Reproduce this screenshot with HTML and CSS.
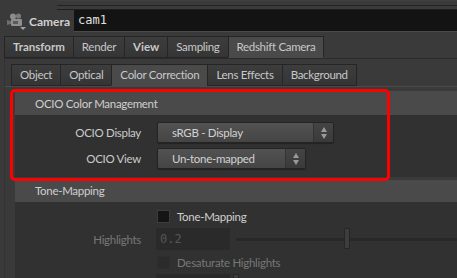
FILE: index.html
```html
<!DOCTYPE html>
<html lang="en">
<head>
<meta charset="UTF-8" />
<title>Camera Parameters</title>
<link rel="stylesheet" href="styles.css">
</head>
<body>
    <div class="strip"><div class="strip-lines"></div></div>

    <div class="nodebar">
        <div class="node-icon">
            <svg width="18" height="14" viewBox="0 0 18 14">
                <circle cx="6" cy="3.5" r="3" fill="#8c8c8c" />
                <circle cx="11.5" cy="3" r="2.6" fill="#7a7a7a" />
                <rect x="4" y="6" width="11" height="7" rx="1" fill="#8f8f8f" />
                <rect x="6" y="8" width="5" height="3" fill="#5a5a5a" />
                <path d="M0 7 L4 8 L4 11 L0 12 Z" fill="#6e6e6e" />
            </svg>
            <span class="caret"></span>
        </div>
        <span class="node-type">Camera</span>
        <div class="node-name">cam1</div>
    </div>

    <div class="tabs tabs-main">
        <div class="tab bold">Transform</div>
        <div class="tab">Render</div>
        <div class="tab bold">View</div>
        <div class="tab">Sampling</div>
        <div class="tab active">Redshift Camera</div>
    </div>

    <div class="folder">
        <div class="tabs tabs-sub">
            <div class="tab">Object</div>
            <div class="tab">Optical</div>
            <div class="tab active">Color Correction</div>
            <div class="tab">Lens Effects</div>
            <div class="tab">Background</div>
        </div>
    </div>

    <div class="folder-body">
        <div class="section">
            <div class="section-head">OCIO Color Management</div>
            <div class="section-body ocio">
                <div class="row">
                    <span class="row-label">OCIO Display</span>
                    <div class="menu menu-display">
                        <span class="menu-text">sRGB - Display</span>
                        <span class="menu-arrows"><i class="up"></i><i class="down"></i></span>
                    </div>
                </div>
                <div class="row">
                    <span class="row-label">OCIO View</span>
                    <div class="menu menu-view">
                        <span class="menu-text">Un-tone-mapped</span>
                        <span class="menu-arrows"><i class="up"></i><i class="down"></i></span>
                    </div>
                </div>
            </div>
        </div>

        <div class="section">
            <div class="section-head short">Tone-Mapping</div>
            <div class="section-body tone">
                <div class="row">
                    <span class="row-label"></span>
                    <span class="check"></span>
                    <span class="check-label">Tone-Mapping</span>
                </div>
                <div class="row">
                    <span class="row-label disabled">Highlights</span>
                    <div class="field">0.2</div>
                    <div class="slider"><span class="handle" style="left: 108px"></span></div>
                </div>
                <div class="row">
                    <span class="row-label"></span>
                    <span class="check off"></span>
                    <span class="check-label disabled">Desaturate Highlights</span>
                </div>
                <div class="row">
                    <span class="row-label"></span>
                    <div class="field"></div>
                    <div class="slider"><span class="handle" style="left: -3px"></span></div>
                </div>
            </div>
        </div>
    </div>

    <!-- annotation -->
    <div class="highlight-box"></div>
</body>
</html>
```

FILE: styles.css
```css
/* General Reset */
* {
    margin: 0;
    padding: 0;
    box-sizing: border-box;
}

body {
    font-family: 'Lato', 'Noto Sans', sans-serif;
    font-size: 11.5px;
    letter-spacing: -0.3px;
    background-color: #3a3a3a;
    color: #cbcbcb;
    width: 457px;
    height: 278px;
    overflow: hidden;
    position: relative;
}

/* Top strip */
.strip {
    height: 10px;
    padding-left: 57px;
}

.strip-lines {
    height: 10px;
    border-top: 1px solid #3f3f3f;
    border-bottom: 1px solid #1f1f1f;
    background: linear-gradient(#3a3a3a 0 4px, #232323 4px 5px, #3b3b3b 5px);
}

/* Node bar */
.nodebar {
    display: flex;
    align-items: center;
    height: 22px;
    margin-bottom: 4px;
}

.node-icon {
    position: relative;
    width: 29px;
    height: 22px;
    padding: 3px 0 0 7px;
}

.caret {
    position: absolute;
    left: 20px;
    top: 17px;
    border-left: 3px solid transparent;
    border-right: 3px solid transparent;
    border-top: 3px solid #a0a0a0;
}

.node-type {
    font-weight: 700;
    font-size: 12px;
    letter-spacing: 0;
    color: #d0d0d0;
    width: 45px;
}

.node-name {
    flex: 1;
    height: 22px;
    background-color: #131313;
    border-bottom: 1px solid #4a4a4a;
    font-family: 'DejaVu Sans Mono', monospace;
    font-size: 12px;
    letter-spacing: 0;
    color: #e0e0e0;
    line-height: 21px;
    padding-left: 4px;
}

/* Tabs */
.tabs {
    display: flex;
    height: 22px;
}

.tabs-main {
    margin-left: 4px;
}

.tab {
    height: 22px;
    line-height: 20px;
    padding: 0 8px;
    border: 1px solid #252525;
    margin-left: -1px;
    background: linear-gradient(#3d3d3d, #353535);
    color: #c8c8c8;
    white-space: nowrap;
}

.tab:first-child {
    margin-left: 0;
}

.tab.bold {
    font-weight: 700;
    letter-spacing: 0;
}

.tab.active {
    background: #4a4a4a;
    border-bottom-color: #4a4a4a;
}

/* Folder frames */
.folder {
    margin-left: 4px;
    border-top: 1px solid #2b2b2b;
    border-left: 1px solid #333333;
    padding: 5px 0 0 6px;
}

.folder-body {
    margin-left: 4px;
    border-left: 1px solid #333333;
    border-top: 1px solid #4a4a4a;
    padding: 4px 0 0 10px;
}

.section {
    margin-bottom: 3px;
}

.section-head {
    height: 24px;
    line-height: 25px;
    padding-left: 20px;
    background-color: #4a4a4a;
    color: #cfcfcf;
}

.section-head.short {
    height: 22px;
    line-height: 22px;
}

.section-body {
    background-color: #313131;
}

.ocio {
    padding: 7px 0 8px;
}

.tone {
    padding-top: 3px;
    height: 80px;
}

.row {
    display: flex;
    align-items: center;
    height: 21px;
}

.ocio .row + .row {
    margin-top: 5px;
}

.tone .row {
    height: 22px;
    margin-bottom: 1px;
}

.row-label {
    width: 126px;
    text-align: right;
    margin-right: 16px;
    color: #cbcbcb;
}

.row-label.disabled,
.check-label.disabled {
    color: #777777;
}

/* Menus */
.menu {
    display: flex;
    height: 21px;
    border: 1px solid #242424;
    border-radius: 2px;
    background: linear-gradient(#525252, #454545);
    box-shadow: 0 1px 1px rgba(0, 0, 0, 0.3);
}

.menu-display {
    width: 177px;
}

.menu-view {
    width: 149px;
}

.menu-text {
    flex: 1;
    padding-left: 14px;
    line-height: 19px;
    color: #d2d2d2;
}

.menu-arrows {
    width: 20px;
    border-left: 1px solid #333333;
    background: linear-gradient(#444444, #3a3a3a);
    display: flex;
    flex-direction: column;
    align-items: center;
    justify-content: center;
    gap: 2px;
}

.menu-arrows i {
    width: 0;
    height: 0;
    border-left: 3px solid transparent;
    border-right: 3px solid transparent;
}

.menu-arrows .up {
    border-bottom: 5px solid #9a9a9a;
}

.menu-arrows .down {
    border-top: 5px solid #9a9a9a;
}

/* Tone-mapping controls */
.check {
    width: 13px;
    height: 13px;
    background-color: #151515;
    border: 1px solid #3c3c3c;
    margin-right: 7px;
}

.check.off {
    background-color: #2b2b2b;
    border-color: #2e2e2e;
}

.check-label {
    color: #cfcfcf;
}

.field {
    width: 74px;
    height: 22px;
    margin-left: -1px;
    background-color: #2a2a2a;
    font-family: 'DejaVu Sans Mono', monospace;
    font-size: 12px;
    letter-spacing: 0;
    color: #565656;
    line-height: 22px;
    padding-left: 4px;
}

.slider {
    position: relative;
    flex: 1;
    height: 3px;
    margin-left: 6px;
    background-color: #282828;
    border-radius: 1px;
}

.handle {
    position: absolute;
    top: -10px;
    width: 6px;
    height: 21px;
    background-color: #3d3d3d;
    border: 1px solid #262626;
    border-radius: 1px;
}

/* Red annotation box */
.highlight-box {
    position: absolute;
    left: 10px;
    top: 89px;
    width: 380px;
    height: 92px;
    border: 3px solid #ff0000;
    border-radius: 5px;
}
```
